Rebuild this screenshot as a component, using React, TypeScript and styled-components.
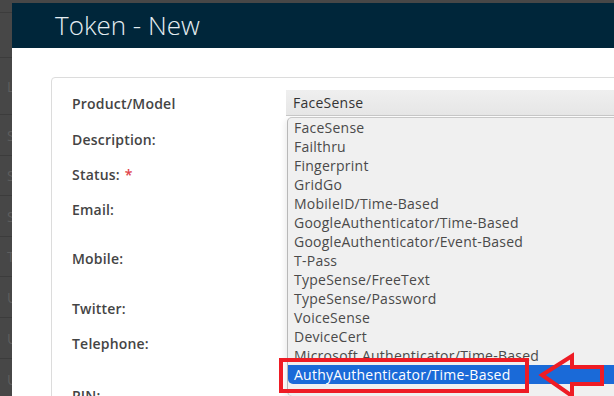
import styled, { createGlobalStyle } from "styled-components";

const GlobalStyle = createGlobalStyle`
  html, body {
    margin: 0;
    padding: 0;
    background: #474747;
    overflow: hidden;
  }
  #root {
    width: 614px;
    height: 396px;
  }
`;

const backRows = [
  { letter: "", h: 13 },
  { letter: "", h: 45 },
  { letter: "L", h: 57 },
  { letter: "S", h: 41 },
  { letter: "S", h: 40 },
  { letter: "S", h: 41 },
  { letter: "T", h: 40 },
  { letter: "U", h: 41 },
  { letter: "U", h: 41 },
  { letter: "U", h: 41 },
];

const rows = [
  { label: "Product/Model", h: 30 },
  { label: "Description:", h: 42 },
  { label: "Status:", h: 28, required: true },
  { label: "Email:", h: 42 },
  { label: "Mobile:", h: 56 },
  { label: "Twitter:", h: 44 },
  { label: "Telephone:", h: 26 },
  { label: "PIN:", h: 78 },
];

const options = [
  "FaceSense",
  "Failthru",
  "Fingerprint",
  "GridGo",
  "MobileID/Time-Based",
  "GoogleAuthenticator/Time-Based",
  "GoogleAuthenticator/Event-Based",
  "T-Pass",
  "TypeSense/FreeText",
  "TypeSense/Password",
  "VoiceSense",
  "DeviceCert",
  "Microsoft Authenticator/Time-Based",
  "AuthyAuthenticator/Time-Based",
];

const App: React.FC = () => {
  return (
    <>
      <GlobalStyle />
      <Page>
        <Backdrop>
          {backRows.map((r, i) => (
            <BackRow key={i} $h={r.h}>
              {r.letter}
            </BackRow>
          ))}
        </Backdrop>
        <Modal>
          <Header>Token - New</Header>
          <Body>
            <Card>
              {rows.map((r, i) => (
                <Row key={r.label} $h={r.h}>
                  <Label>
                    {r.label}
                    {r.required && <Star>*</Star>}
                  </Label>
                  {i === 0 && (
                    <SelectWrap>
                      <Select>FaceSense</Select>
                      <Dropdown>
                        {options.map((o) => (
                          <Option
                            key={o}
                            $active={o === "AuthyAuthenticator/Time-Based"}
                          >
                            {o}
                          </Option>
                        ))}
                      </Dropdown>
                    </SelectWrap>
                  )}
                </Row>
              ))}
            </Card>
          </Body>
        </Modal>
        <Annotation width="614" height="396" viewBox="0 0 614 396">
          <rect
            x="281"
            y="360"
            width="246"
            height="31"
            fill="none"
            stroke="#ee1c25"
            strokeWidth="4"
          />
          <polygon
            points="542,375 572,356 572,367 602,367 602,384 572,384 572,396"
            fill="none"
            stroke="#ee1c25"
            strokeWidth="4"
          />
        </Annotation>
      </Page>
    </>
  );
};

export default App;

const Page = styled.div`
  position: relative;
  display: flex;
  width: 614px;
  height: 396px;
  overflow: hidden;
`;

const Backdrop = styled.div`
  width: 12px;
  flex-shrink: 0;
  display: flex;
  flex-direction: column;
`;

const BackRow = styled.div<{ $h: number }>`
  height: ${(p) => p.$h}px;
  flex-shrink: 0;
  border-bottom: 1px solid #3c3c3c;
  display: flex;
  align-items: center;
  padding-left: 7px;
  font-family: "Open Sans", sans-serif;
  font-size: 14px;
  color: #5e5e5e;
  overflow: hidden;
  box-sizing: border-box;
`;

const Modal = styled.div`
  margin-top: 3px;
  width: 700px;
  flex-shrink: 0;
  background: #fff;
  display: flex;
  flex-direction: column;
`;

const Header = styled.div`
  height: 45px;
  flex-shrink: 0;
  background: #00263a;
  color: #e6eef2;
  font-family: "Open Sans", sans-serif;
  font-weight: 300;
  font-size: 26px;
  display: flex;
  align-items: center;
  padding-left: 43px;
  padding-bottom: 1px;
  box-sizing: border-box;
`;

const Body = styled.div`
  padding: 29px 0 0 39px;
`;

const Card = styled.div`
  border: 1px solid #dcdcdc;
  border-radius: 4px;
  padding: 10px 0 0 20px;
  display: flex;
  flex-direction: column;
`;

const Row = styled.div<{ $h: number }>`
  height: ${(p) => p.$h}px;
  flex-shrink: 0;
  display: flex;
  align-items: center;
`;

const Label = styled.div`
  width: 214px;
  flex-shrink: 0;
  font-family: "Open Sans", sans-serif;
  font-weight: 600;
  font-size: 14px;
  letter-spacing: 0.2px;
  color: #444;
`;

const Star = styled.span`
  color: #e0434b;
  margin-left: 5px;
`;

const SelectWrap = styled.div`
  position: relative;
  width: 360px;
`;

const Select = styled.div`
  height: 25px;
  background: linear-gradient(#efefef, #e6e6e6);
  border-bottom: 1px solid #c8c8c8;
  font-family: "Open Sans", sans-serif;
  font-size: 14px;
  letter-spacing: 0.25px;
  color: #333;
  display: flex;
  align-items: center;
  padding-left: 7px;
`;

const Dropdown = styled.div`
  position: absolute;
  top: 27px;
  left: 1px;
  right: 0;
  background: #f0f0f0;
  border-left: 1px solid #b8b8b8;
  border-top: 1px solid #c8c8c8;
  border-top-left-radius: 5px;
  border-bottom-left-radius: 5px;
  padding-bottom: 12px;
  box-shadow: -2px 2px 6px rgba(0, 0, 0, 0.08);
`;

const Option = styled.div<{ $active?: boolean }>`
  height: 19px;
  display: flex;
  align-items: center;
  padding-left: 6px;
  font-family: "Open Sans", sans-serif;
  font-size: 14px;
  letter-spacing: 0.25px;
  color: ${(p) => (p.$active ? "#fff" : "#4a4a4a")};
  background: ${(p) => (p.$active ? "#1a6ad8" : "transparent")};
  border-radius: ${(p) => (p.$active ? "0 0 0 5px" : "0")};
  white-space: nowrap;
`;

const Annotation = styled.svg`
  position: absolute;
  left: 0;
  top: 0;
  pointer-events: none;
`;
